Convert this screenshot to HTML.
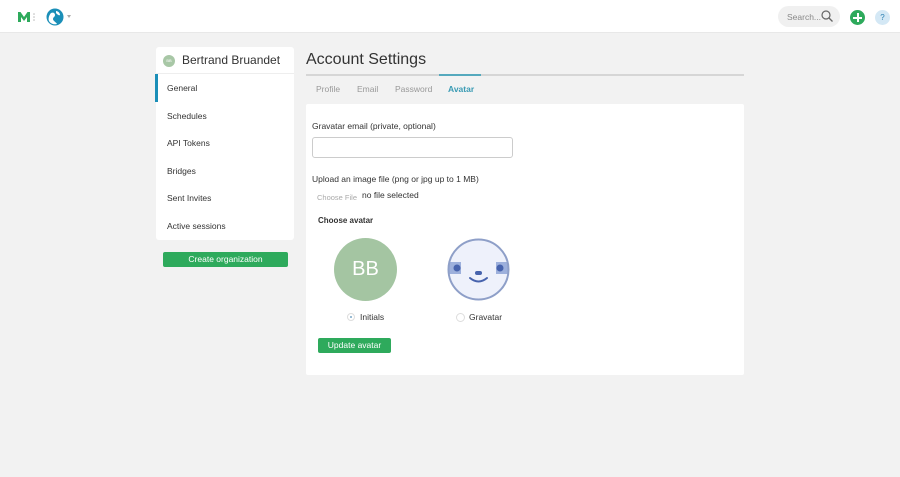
<!DOCTYPE html>
<html><head><meta charset="utf-8"><style>
*{margin:0;padding:0;box-sizing:border-box}
body{width:900px;height:477px;background:#f2f2f2;font-family:"Liberation Sans",sans-serif;color:#333;position:relative;overflow:hidden}
.top{position:absolute;left:0;top:0;width:900px;height:33px;background:#fff;border-bottom:1px solid #e8e8e8}
.abs{position:absolute}
.side{position:absolute;left:156px;top:47px;width:138px;height:193px;background:#fff;border-radius:3px}
.side .item{position:absolute;left:11px;font-size:8.5px;color:#333}
.btn{position:absolute;background:#2eaa5c;color:#fff;font-size:8.5px;text-align:center;border-radius:2px}
.panel{position:absolute;left:306px;top:104px;width:438px;height:271px;background:#fff;border-radius:2px}
.t{position:absolute;font-size:8.5px;white-space:nowrap}
</style></head><body>
<div class="top">
  <svg class="abs" style="left:17px;top:11px" width="20" height="12" viewBox="0 0 20 12">
    <path d="M1 11V1h2.5l3.5 5 3.5-5H13v10h-3V6l-3 4-3-4v5z" fill="#2eaa5c"/>
    <circle cx="17" cy="3" r=".8" fill="#bbb"/><circle cx="17" cy="6" r=".8" fill="#bbb"/><circle cx="17" cy="9" r=".8" fill="#bbb"/>
  </svg>
  <svg class="abs" style="left:46px;top:8px" width="18" height="18" viewBox="0 0 18 18">
    <circle cx="9" cy="9" r="8.5" fill="#1b8fb8"/>
    <path d="M5 5c2-1 4 0 4 2s-2 2-2 4 3 3 4 5c-4 1-7-1-8-3s0-6 2-8zM10 3c2 0 4 2 4 4-1 1-3-1-4-2z" fill="#fff"/>
  </svg>
  <div class="abs" style="left:67px;top:15px;width:0;height:0;border-left:2.5px solid transparent;border-right:2.5px solid transparent;border-top:3px solid #aaa"></div>
  <div class="abs" style="left:778px;top:6px;width:62px;height:21px;background:#f0f0f0;border-radius:11px"></div>
  <div class="t" style="left:787px;top:12px;color:#888;font-size:8.5px">Search...</div>
  <svg class="abs" style="left:821px;top:10px" width="12" height="12" viewBox="0 0 12 12"><circle cx="5" cy="5" r="4" fill="none" stroke="#666" stroke-width="1.2"/><path d="M8 8l3.5 3.5" stroke="#666" stroke-width="1.3"/></svg>
  <div class="abs" style="left:850px;top:10px;width:15px;height:15px;border-radius:50%;background:#2eaa5c"></div>
  <div class="abs" style="left:856.5px;top:13px;width:2px;height:9px;background:#fff"></div>
  <div class="abs" style="left:853px;top:16.5px;width:9px;height:2px;background:#fff"></div>
  <div class="abs" style="left:875px;top:10px;width:15px;height:15px;border-radius:50%;background:#d4e8f5;color:#2b7fb0;font-size:8px;text-align:center;line-height:15px">?</div>
</div>

<div class="side">
  <div class="abs" style="left:7px;top:8px;width:12px;height:12px;border-radius:50%;background:#a8c7a6;font-size:4px;color:#fff;text-align:center;line-height:12px">BB</div>
  <div class="t" style="left:26px;top:6px;font-size:12px;color:#333">Bertrand Bruandet</div>
  <div class="abs" style="left:0;top:26px;width:138px;height:1px;background:#eee"></div>
  <div class="abs" style="left:-1px;top:27px;width:3px;height:28px;background:#1b8fb8"></div>
  <div class="item" style="top:36px">General</div>
  <div class="item" style="top:64px">Schedules</div>
  <div class="item" style="top:91px">API Tokens</div>
  <div class="item" style="top:119px">Bridges</div>
  <div class="item" style="top:146px">Sent Invites</div>
  <div class="item" style="top:174px">Active sessions</div>
</div>
<div class="btn" style="left:163px;top:252px;width:125px;height:15px;line-height:15px">Create organization</div>

<div class="t" style="left:306px;top:51px;font-size:16px;color:#333">Account Settings</div>
<div class="abs" style="left:306px;top:74px;width:438px;height:1.5px;background:#d6d6d6"></div>
<div class="abs" style="left:439px;top:73.5px;width:42px;height:2px;background:#55a9bd"></div>
<div class="t" style="left:316px;top:84px;color:#999">Profile</div>
<div class="t" style="left:357px;top:84px;color:#999">Email</div>
<div class="t" style="left:395px;top:84px;color:#999">Password</div>
<div class="t" style="left:448px;top:84px;color:#3a9bb4;font-weight:bold">Avatar</div>

<div class="panel">
  <div class="t" style="left:6px;top:17px">Gravatar email (private, optional)</div>
  <div class="abs" style="left:6px;top:33px;width:201px;height:21px;border:1px solid #ccc;border-radius:3px"></div>
  <div class="t" style="left:6px;top:70px">Upload an image file (png or jpg up to 1 MB)</div>
  <div class="t" style="left:11px;top:89px;color:#aaa;font-size:7.5px">Choose File</div>
  <div class="t" style="left:56px;top:86px">no file selected</div>
  <div class="t" style="left:12px;top:112px;font-weight:bold;font-size:8px">Choose avatar</div>
  <div class="abs" style="left:28px;top:134px;width:63px;height:63px;border-radius:50%;background:#a4c5a2;color:#fff;font-size:20px;text-align:center;line-height:63px">BB</div>
  <svg class="abs" style="left:141px;top:134px" width="63" height="63" viewBox="0 0 63 63">
    <defs><clipPath id="c"><circle cx="31.5" cy="31.5" r="30"/></clipPath></defs>
    <circle cx="31.5" cy="31.5" r="30" fill="#eef1fb"/>
    <rect x="0" y="24" width="63" height="12" fill="#9db0dc" clip-path="url(#c)"/>
    <rect x="14" y="24" width="35" height="12" fill="#eef1fb"/>
    <circle cx="31.5" cy="31.5" r="30" fill="none" stroke="#8e9fc8" stroke-width="2"/>
    <circle cx="10" cy="30" r="3.5" fill="#4763ad"/><circle cx="53" cy="30" r="3.5" fill="#4763ad"/>
    <rect x="28" y="33" width="7" height="4" rx="2" fill="#4763ad"/>
    <path d="M23 40q8.5 7 17 0" fill="none" stroke="#4763ad" stroke-width="2" stroke-linecap="round"/>
  </svg>
  <div class="abs" style="left:41px;top:209px;width:8px;height:8px;border-radius:50%;border:1px solid #ddd"></div>
  <div class="abs" style="left:44px;top:212px;width:2px;height:2px;border-radius:50%;background:#7aa7c7"></div>
  <div class="t" style="left:54px;top:208px">Initials</div>
  <div class="abs" style="left:150px;top:209px;width:9px;height:9px;border-radius:50%;border:1px solid #ddd"></div>
  <div class="t" style="left:163px;top:208px">Gravatar</div>
  <div class="btn" style="left:12px;top:234px;width:73px;height:15px;line-height:15px">Update avatar</div>
</div>
</body></html>
